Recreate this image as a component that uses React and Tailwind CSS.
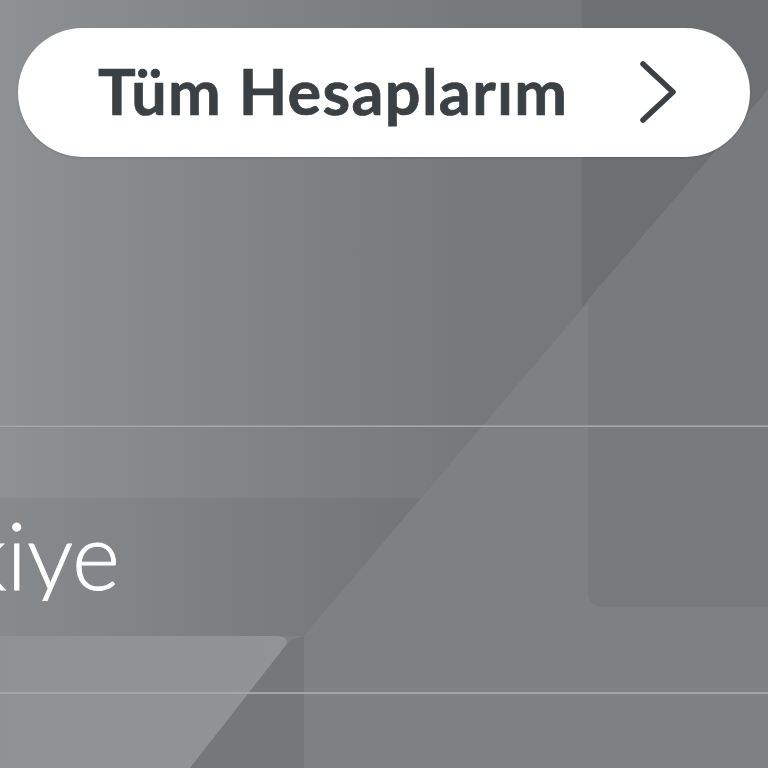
import React from 'react'

// backdrop: soft grey facets behind the account card
function Backdrop() {
    return (
        <svg className="absolute inset-0" width="768" height="768" viewBox="0 0 768 768">
            <defs>
                <linearGradient id="base" x1="0" y1="0" x2="768" y2="0" gradientUnits="userSpaceOnUse">
                    <stop offset="0" stopColor="#8e9194" />
                    <stop offset="0.35" stopColor="#808386" />
                    <stop offset="0.62" stopColor="#76797c" />
                    <stop offset="1" stopColor="#76797c" />
                </linearGradient>
                <linearGradient id="tile" x1="0" y1="0" x2="290" y2="0" gradientUnits="userSpaceOnUse">
                    <stop offset="0" stopColor="#8f9295" />
                    <stop offset="1" stopColor="#919497" />
                </linearGradient>
            </defs>
            <rect width="768" height="768" fill="url(#base)" />
            {/* darker strip under the header */}
            <path d="M0 498 H421 L304 636 H0 Z" fill="#000" opacity="0.045" />
            {/* right column */}
            <path d="M582 0 H768 V90 L582 307 Z" fill="#000" opacity="0.07" />
            {/* light diagonal facet */}
            <path d="M768 90 V768 H304 V636 Z" fill="#7e8184" />
            <path d="M768 90 V607 H604 Q588 607 588 591 V300 Z" fill="#787b7e" />
            {/* bottom-left tile */}
            <path d="M0 636 H276 Q292 636 284 650 L190 768 H0 Z" fill="url(#tile)" />
            <path d="M190 768 L290 640 L304 636 V768 Z" fill="#75787b" />
        </svg>
    )
}

function Chevron() {
    return (
        <svg width="40" height="64" viewBox="0 0 40 64" fill="none">
            <path d="M4 3 L34 31 L4 59" stroke="#3b4045" strokeWidth="5.5" strokeLinecap="round" strokeLinejoin="round" />
        </svg>
    )
}

export default function App() {
    return (
        <div className="relative w-[768px] h-[768px] overflow-hidden bg-[#7e8184]">
            <Backdrop />
            <div className="relative flex flex-col">
                <button className="mt-[28px] mx-[18px] h-[129px] rounded-full bg-white flex items-center justify-between pl-[80px] pr-[71px] shadow-[0_1px_2px_rgba(0,0,0,0.15)]">
                    <span className="font-['Lato',sans-serif] font-bold text-[63px] leading-none text-[#3b4045] tracking-[1.3px] -mt-[4px] [-webkit-text-stroke:0.7px_#3b4045]">Tüm Hesaplarım</span>
                    <Chevron />
                </button>

                <div className="mt-[268px] h-[2px] bg-[#a3a6a9] border-t border-[#70737640]" />

                <div className="h-[265px] flex items-start">
                    <div className="w-[120px] mt-[82px] overflow-hidden flex justify-end whitespace-nowrap">
                        <span className="font-['Lato',sans-serif] font-light text-[92px] leading-[92px] text-white [-webkit-text-stroke:0.8px_white]">Türkiye</span>
                    </div>
                </div>

                <div className="h-[2px] bg-[#a3a6a9]" />
            </div>
        </div>
    )
}
